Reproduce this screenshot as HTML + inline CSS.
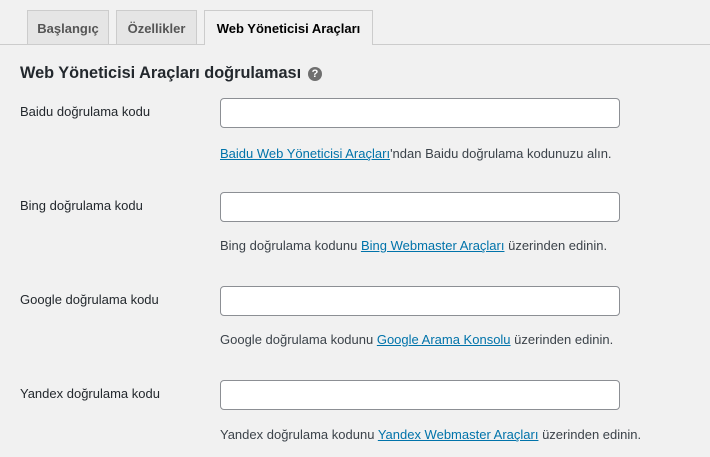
<!DOCTYPE html><html><head><style>
body{margin:0;background:#f1f1f1;font-family:"Liberation Sans",sans-serif;color:#23282d;width:710px;height:457px;overflow:hidden;position:relative;font-size:13px}
.tabs{position:absolute;left:0;top:0;width:710px;height:44px;border-bottom:1px solid #ccc}
.tab{position:absolute;top:10px;height:33px;border:1px solid #ccc;border-bottom:none;background:#e5e5e5;font-weight:bold;font-size:13px;color:#555;line-height:36px;text-align:center}
.tab.a{background:#f1f1f1;color:#000;height:34px}
h2{position:absolute;left:20px;top:64px;margin:0;font-size:16.3px;font-weight:600;color:#23282d;white-space:nowrap}
.q{position:absolute;left:308px;top:67px;width:14px;height:14px;border-radius:50%;background:#6f6f6f;color:#fff;font-size:11px;font-weight:bold;text-align:center;line-height:14px}
.l{position:absolute;left:20px;font-size:13px}
.in{position:absolute;left:220px;width:398px;height:28px;border:1px solid #8c8f94;border-radius:4px;background:#fff}
.d{position:absolute;left:220px;font-size:13px;color:#3c434a}
a{color:#0073aa;text-decoration:underline}
</style></head><body>
<div class="tabs">
<div class="tab" style="left:27px;width:80px">Başlangıç</div>
<div class="tab" style="left:116px;width:79px">Özellikler</div>
<div class="tab a" style="left:204px;width:167px">Web Yöneticisi Araçları</div>
</div>
<h2>Web Yöneticisi Araçları doğrulaması</h2><div class="q">?</div>
<div class="l" style="top:104px">Baidu doğrulama kodu</div><div class="in" style="top:98px"></div>
<div class="d" style="top:146px"><a>Baidu Web Yöneticisi Araçları</a>'ndan Baidu doğrulama kodunuzu alın.</div>
<div class="l" style="top:198px">Bing doğrulama kodu</div><div class="in" style="top:192px"></div>
<div class="d" style="top:238px">Bing doğrulama kodunu <a>Bing Webmaster Araçları</a> üzerinden edinin.</div>
<div class="l" style="top:292px">Google doğrulama kodu</div><div class="in" style="top:286px"></div>
<div class="d" style="top:332px">Google doğrulama kodunu <a>Google Arama Konsolu</a> üzerinden edinin.</div>
<div class="l" style="top:386px">Yandex doğrulama kodu</div><div class="in" style="top:380px"></div>
<div class="d" style="top:427px">Yandex doğrulama kodunu <a>Yandex Webmaster Araçları</a> üzerinden edinin.</div>
</body></html>
